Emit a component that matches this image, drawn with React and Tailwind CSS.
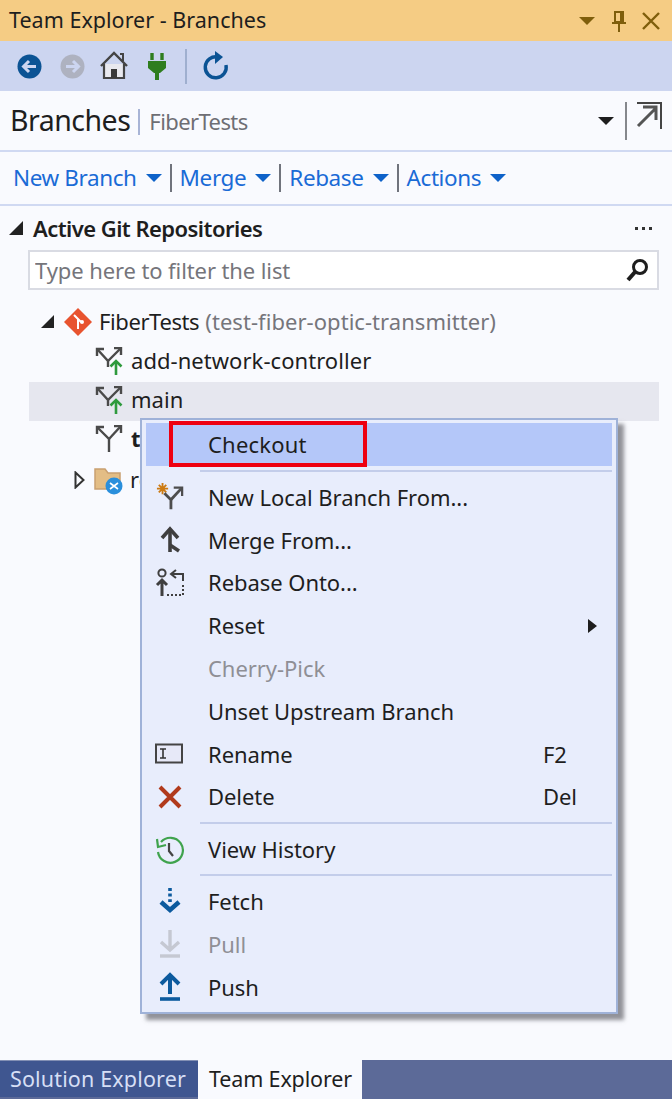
import { useState } from 'react';

const font = { fontFamily: '"Noto Sans", "Open Sans", sans-serif' };

const Caret = ({ className }) => (
  <svg width="16" height="8" viewBox="0 0 16 8" className={className}>
    <path d="M0 0H16L8 8Z" fill="currentColor" />
  </svg>
);

const BranchGlyph = ({ up }) => (
  <svg width="28" height="28" viewBox="0 0 28 28" className="shrink-0">
    <g fill="none" stroke="#4a4a4a" strokeWidth="2.4">
      {up ? (
        <>
          <path d="M13 20V14L3 3" />
          <path d="M13 14L25 2" />
          <path d="M2 9V2H9" />
          <path d="M19 1H26V8" />
        </>
      ) : (
        <>
          <path d="M14 27V14L3 3" />
          <path d="M14 14L25 2" />
          <path d="M2 9V2H9" />
          <path d="M19 1H26V8" />
        </>
      )}
    </g>
    {up && (
      <g fill="none" stroke="#2e9a3d" strokeWidth="2.6">
        <path d="M21 28V14" />
        <path d="M15.5 19.5L21 14L26.5 19.5" />
      </g>
    )}
  </svg>
);

const TreeRow = ({ up, bold, children }) => (
  <div className="h-[39px] pl-[95px] pb-[4px] flex items-center gap-[8px]">
    <BranchGlyph up={up} />
    <span className={`text-[22px] tracking-[0.05px] text-[#1e1e1e] ${bold ? 'font-bold' : ''}`}>{children}</span>
  </div>
);

const Action = ({ label }) => (
  <div className="flex items-center">
    <span className="text-[22.5px] tracking-[-0.4px] text-[#1a6bd6]">{label}</span>
    <Caret className="ml-[9px] text-[#0e62c9]" />
  </div>
);

const ActionSep = () => <div className="w-[2px] h-[28px] bg-[#70737c] mx-[8px]" />;

const icons = {
  newBranch: (
    <svg width="28" height="28" viewBox="0 0 30 30">
      <g stroke="#cc7a12" strokeWidth="2">
        <path d="M1 6H13M7 0V12M3 2L11 10M11 2L3 10" />
      </g>
      <g fill="none" stroke="#4d4d4d" strokeWidth="3">
        <path d="M16 28V18L9 11" />
        <path d="M16 18L27 6" />
      </g>
      <path d="M19 5H28V14" fill="none" stroke="#4d4d4d" strokeWidth="2.4" />
    </svg>
  ),
  merge: (
    <svg width="30" height="30" viewBox="0 0 30 30">
      <g fill="none" stroke="#3f3f3f" strokeWidth="3.6">
        <path d="M15 4V27" />
        <path d="M7 13L15 4L23 13" />
        <path d="M15 20L24 26" />
      </g>
    </svg>
  ),
  rebase: (
    <svg width="30" height="30" viewBox="0 0 30 30">
      <circle cx="7" cy="5" r="3.6" fill="none" stroke="#3f3f3f" strokeWidth="2" />
      <path d="M7 28V12M2 17L7 12L12 17" fill="none" stroke="#3f3f3f" strokeWidth="3" />
      <path d="M28 13V6H17M21 2L16 6L21 10" fill="none" stroke="#3f3f3f" strokeWidth="2" />
      <path d="M12 27H28M28 27V15" fill="none" stroke="#3f3f3f" strokeWidth="2" strokeDasharray="2 2" />
    </svg>
  ),
  rename: (
    <svg width="30" height="22" viewBox="0 0 30 22">
      <rect x="1" y="1.5" width="26" height="18" fill="#e7e9f8" stroke="#444" strokeWidth="2" />
      <path d="M5 6H11M8 6V15M5 15H11" fill="none" stroke="#333" strokeWidth="1.6" />
    </svg>
  ),
  delete: (
    <svg width="26" height="26" viewBox="0 0 26 26">
      <path d="M3 3L23 23M23 3L3 23" stroke="#b13a1c" strokeWidth="4" />
    </svg>
  ),
  history: (
    <svg width="30" height="30" viewBox="0 0 30 30">
      <path d="M6 7A12.5 12.5 0 1 1 3 17" fill="none" stroke="#3fa34d" strokeWidth="2.2" />
      <path d="M2 4L3 12L11 10" fill="none" stroke="#3fa34d" strokeWidth="2.2" />
      <path d="M14 8V16L18 21" fill="none" stroke="#444" strokeWidth="2.2" />
    </svg>
  ),
  fetch: (
    <svg width="26" height="30" viewBox="0 0 26 30">
      <path d="M13 1V15" stroke="#0c5a9e" strokeWidth="3.6" strokeDasharray="3 2.6" />
      <path d="M4 15L13 23L22 15" fill="none" stroke="#0c5a9e" strokeWidth="4.5" />
    </svg>
  ),
  pull: (
    <svg width="26" height="30" viewBox="0 0 26 30">
      <path d="M13 1V20M4 13L13 21L22 13" fill="none" stroke="#c5c8d2" strokeWidth="3.4" />
      <path d="M3 27H23" stroke="#c5c8d2" strokeWidth="3.4" />
    </svg>
  ),
  push: (
    <svg width="26" height="30" viewBox="0 0 26 30">
      <path d="M13 22V4M4 12L13 3L22 12" fill="none" stroke="#0c5a9e" strokeWidth="4" />
      <path d="M3 27H23" stroke="#0c5a9e" strokeWidth="3.6" />
    </svg>
  ),
};

const MenuItem = ({ icon, label, shortcut, disabled, arrow }) => (
  <div className="h-[42.8px] flex items-center">
    <div className="w-[48px] mr-[14px] flex justify-center shrink-0">{icons[icon]}</div>
    <span className={`flex-1 text-[22px] tracking-[-0.05px] ${disabled ? 'text-[#8f8f95]' : 'text-[#1e1e1e]'}`}>{label}</span>
    {shortcut && <span className="w-[69px] text-[22px] tracking-[-0.15px] text-[#1e1e1e]">{shortcut}</span>}
    {arrow && (
      <svg width="9" height="14" viewBox="0 0 9 14" className="mr-[15px]">
        <path d="M0 0L9 7L0 14Z" fill="#1e1e1e" />
      </svg>
    )}
  </div>
);

const MenuSep = () => <div className="h-[2px] ml-[54px] bg-[#c3cdea]" />;

export default function App() {
  const [filter, setFilter] = useState('');

  return (
    <div className="w-[672px] h-[1099px] flex flex-col bg-[#f9fafe] overflow-hidden" style={font}>
      {/* Title bar */}
      <div className="h-[41px] bg-[#f5cc84] flex items-center pl-[9px] pr-[11px] shrink-0">
        <span className="flex-1 text-[21.5px] tracking-[0.02px] text-[#1e1e1e]">Team Explorer - Branches</span>
        <Caret className="text-[#7f5e0c] mr-[16px]" />
        <svg width="16" height="22" viewBox="0 0 16 22" className="mr-[14px]">
          <path d="M4 2H12V12H4ZM1 13H15M8 13V22" fill="none" stroke="#7f5e0c" strokeWidth="2" />
          <path d="M9 2H12V12H9Z" fill="#7f5e0c" />
        </svg>
        <svg width="20" height="20" viewBox="0 0 20 20">
          <path d="M2 2L18 18M18 2L2 18" stroke="#7f5e0c" strokeWidth="2.4" />
        </svg>
      </div>

      {/* Toolbar */}
      <div className="h-[50px] bg-[#ccd5f0] flex items-center pl-[17px] shrink-0">
        <svg width="25" height="25" viewBox="0 0 25 25">
          <circle cx="12.5" cy="12.5" r="12" fill="#0b5394" />
          <path d="M19 12.5H7M12 7L6.5 12.5L12 18" fill="none" stroke="#ccd5f0" strokeWidth="3" />
        </svg>
        <svg width="25" height="25" viewBox="0 0 25 25" className="ml-[18px]">
          <circle cx="12.5" cy="12.5" r="12" fill="#aeb2c0" />
          <path d="M6 12.5H18M13 7L18.5 12.5L13 18" fill="none" stroke="#ccd5f0" strokeWidth="3" />
        </svg>
        <svg width="30" height="30" viewBox="0 0 30 30" className="ml-[14px]">
          <path d="M2 15L15 2L28 15" fill="none" stroke="#444" strokeWidth="2.4" />
          <path d="M21 3H24V10" fill="none" stroke="#444" strokeWidth="2" />
          <path d="M5 13V27H25V13" fill="#e9e9ef" stroke="#444" strokeWidth="2.2" />
          <path d="M12 27V18H18V27Z" fill="#3a3a3a" />
        </svg>
        <svg width="18" height="28" viewBox="0 0 18 28" className="ml-[19px]">
          <path d="M4 1V8M14 1V8" stroke="#2e7d1e" strokeWidth="3.4" />
          <path d="M0 9H18V16L12 21H6L0 16Z" fill="#2e7d1e" />
          <path d="M9 20V28" stroke="#2e7d1e" strokeWidth="4" />
        </svg>
        <div className="w-[2px] h-[35px] bg-[#9fafcf] ml-[19px]" />
        <svg width="26" height="30" viewBox="0 0 26 30" className="ml-[16px]">
          <path d="M15 6A10.5 10.5 0 1 0 23 14" fill="none" stroke="#0b5394" strokeWidth="3.4" />
          <path d="M12 0L20 6L12 13Z" fill="#0b5394" />
        </svg>
      </div>

      {/* Page header */}
      <div className="h-[59px] flex items-center pl-[10px] pr-[10px] shrink-0">
        <span className="text-[28.5px] tracking-[-0.5px] text-[#1e1e1e]">Branches</span>
        <div className="w-[2px] h-[26px] bg-[#a8b4d6] ml-[8px] mr-[9px] mt-[2px]" />
        <span className="flex-1 text-[22px] tracking-[-0.6px] text-[#6e6e74] mt-[2px]">FiberTests</span>
        <Caret className="text-[#1e1e1e] mr-[11px]" />
        <div className="w-[2px] h-[38px] bg-[#85878c] mr-[9px]" />
        <svg width="26" height="28" viewBox="0 0 26 28" className="mb-[10px]">
          <path d="M1 1H25V27" fill="none" stroke="#444" strokeWidth="2" />
          <path d="M2 24L20 6M7 5H20V18" fill="none" stroke="#555" strokeWidth="3" />
        </svg>
      </div>
      <div className="h-[2px] bg-[#d0d9f2] shrink-0" />

      {/* Actions */}
      <div className="h-[52px] flex items-center pl-[13px] shrink-0">
        <Action label="New Branch" />
        <ActionSep />
        <Action label="Merge" />
        <ActionSep />
        <Action label="Rebase" />
        <ActionSep />
        <Action label="Actions" />
      </div>
      <div className="h-[2px] bg-[#d0d9f2] shrink-0" />

      {/* Tree */}
      <div className="relative flex-1 min-h-0 flex flex-col">
        <div className="h-[44px] flex items-center pl-[9px] pr-[20px]">
          <svg width="14" height="14" viewBox="0 0 14 14">
            <path d="M14 0V14H0Z" fill="#222" />
          </svg>
          <span className="flex-1 ml-[10px] text-[22px] font-semibold tracking-[-0.55px] text-[#1e1e1e]">Active Git Repositories</span>
          <span className="flex gap-[4px]">
            <span className="w-[3px] h-[3px] bg-[#333]" />
            <span className="w-[3px] h-[3px] bg-[#333]" />
            <span className="w-[3px] h-[3px] bg-[#333]" />
          </span>
        </div>
        <div className="ml-[28px] mr-[13px] h-[40px] bg-white border-2 border-[#d9dbe3] flex items-center pl-[5px] pr-[6px]">
          <input
            value={filter}
            onChange={(e) => setFilter(e.target.value)}
            placeholder="Type here to filter the list"
            className="flex-1 min-w-0 outline-none bg-transparent text-[22px] tracking-[-0.1px] text-[#1e1e1e] placeholder:text-[#75757b]"
          />
          <svg width="26" height="26" viewBox="0 0 26 26">
            <circle cx="15" cy="10" r="6.5" fill="none" stroke="#1e1e1e" strokeWidth="3" />
            <path d="M10 15L3 23" stroke="#1e1e1e" strokeWidth="4" />
          </svg>
        </div>

        <div className="h-[39px] mt-[14px] pb-[4px] flex items-center pl-[41px]">
          <svg width="13" height="13" viewBox="0 0 13 13">
            <path d="M13 0V13H0Z" fill="#222" />
          </svg>
          <svg width="28" height="28" viewBox="0 0 28 28" className="ml-[10px]">
            <path d="M14 0L28 14L14 28L0 14Z" fill="#e8532f" />
            <path d="M10 7L17 14M14 11V21" stroke="#fff" strokeWidth="2" />
            <circle cx="18" cy="14" r="2" fill="#fff" />
          </svg>
          <span className="ml-[7px] text-[22px] tracking-[-0.4px] text-[#1e1e1e]">FiberTests</span>
          <span className="ml-[6px] text-[22px] tracking-[0.05px] text-[#75757b]">(test-fiber-optic-transmitter)</span>
        </div>
        <TreeRow up>add-network-controller</TreeRow>
        <div className="ml-[29px] mr-[13px] h-[39px] pl-[66px] pb-[4px] bg-[#e6e7ef] flex items-center gap-[8px]">
          <BranchGlyph up />
          <span className="text-[22px] tracking-[0.05px] text-[#1e1e1e]">main</span>
        </div>
        <TreeRow bold>test</TreeRow>
        <div className="h-[39px] pl-[74px] flex items-center">
          <svg width="11" height="18" viewBox="0 0 11 18">
            <path d="M1.5 1.5L9.5 9L1.5 16.5Z" fill="none" stroke="#333" strokeWidth="2" />
          </svg>
          <svg width="30" height="30" viewBox="0 0 30 30" className="ml-[9px]">
            <path d="M1 4H11L14 8H26V24H1Z" fill="#e3bd85" stroke="#c9a070" strokeWidth="1.5" />
            <circle cx="20" cy="21" r="8.5" fill="#2a8fdc" />
            <path d="M16 18L24 24M24 18L16 24" stroke="#fff" strokeWidth="1.6" />
          </svg>
          <span className="ml-[6px] text-[22px] text-[#1e1e1e]">remotes</span>
        </div>

        {/* Context menu */}
        <div className="absolute left-[140px] top-[212px] w-[478px] h-[596px] bg-[#e8edfc] border-2 border-[#9fb2d8] shadow-[6px_6px_4px_rgba(60,60,70,0.55)] pt-[3px] px-[4px]">
          <div className="h-[43px] bg-[#b4c7f9] flex items-center pl-[62px]">
            <span className="text-[22px] tracking-[0.2px] text-[#1e1e1e]">Checkout</span>
          </div>
          <div className="h-[4px]" />
          <MenuSep />
          <div className="h-[4px]" />
          <MenuItem icon="newBranch" label="New Local Branch From..." />
          <MenuItem icon="merge" label="Merge From..." />
          <MenuItem icon="rebase" label="Rebase Onto..." />
          <MenuItem label="Reset" arrow />
          <MenuItem label="Cherry-Pick" disabled />
          <MenuItem label="Unset Upstream Branch" />
          <MenuItem icon="rename" label="Rename" shortcut="F2" />
          <MenuItem icon="delete" label="Delete" shortcut="Del" />
          <div className="h-[4px]" />
          <MenuSep />
          <div className="h-[4px]" />
          <MenuItem icon="history" label="View History" />
          <div className="h-[3px]" />
          <MenuSep />
          <div className="h-[4px]" />
          <MenuItem icon="fetch" label="Fetch" />
          <MenuItem icon="pull" label="Pull" disabled />
          <MenuItem icon="push" label="Push" />
        </div>

        {/* Red callout around Checkout */}
        <div className="absolute left-[169px] top-[215px] w-[198px] h-[46px] border-[4px] border-[#ee0011]" />
      </div>

      {/* Bottom tabs */}
      <div className="h-[39px] bg-[#5c6a98] flex shrink-0">
        <div className="w-[198px] bg-[#3f5690] border-t border-[#8390b4] flex items-center pl-[10px] mb-[2px]">
          <span className="text-[21.5px] tracking-[0.15px] text-[#d6dff5]">Solution Explorer</span>
        </div>
        <div className="w-[164px] bg-[#f9fafe] flex items-center pl-[11px]">
          <span className="text-[21.5px] tracking-[-0.15px] text-[#1e1e1e]">Team Explorer</span>
        </div>
      </div>
    </div>
  );
}
